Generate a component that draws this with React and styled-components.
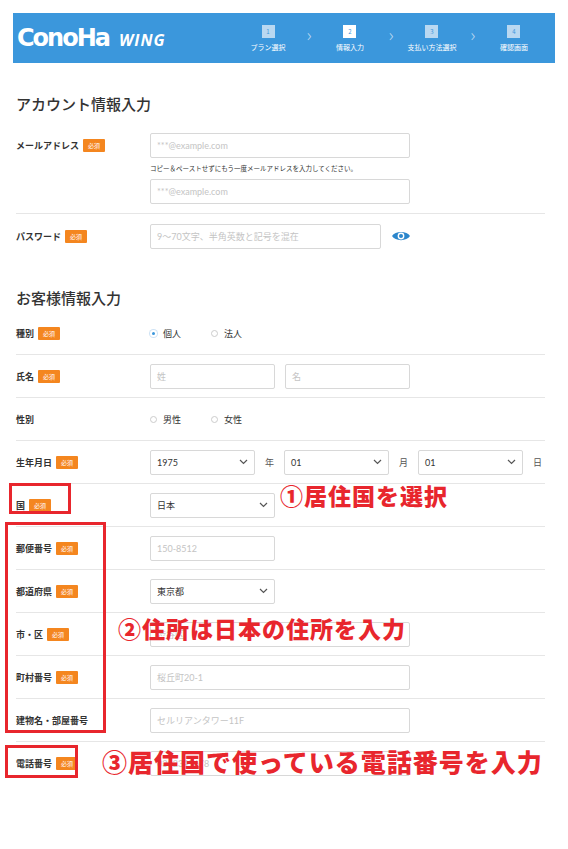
import React from 'react';
import styled, { createGlobalStyle } from 'styled-components';

const Global = createGlobalStyle`
  body { margin: 0; background: #fff; font-family: "Noto Sans CJK JP", "Noto Sans", sans-serif; color: #333; }
`;

const Page = styled.div`
  position: relative;
  width: 568px;
  height: 849px;
  padding: 13px 13px 0;
  box-sizing: border-box;
  overflow: hidden;
`;

const Header = styled.div`
  height: 50px;
  background: #3b97dc;
  display: flex;
  align-items: center;
  padding: 0 10px 0 4px;
`;

const Logo = styled.div`
  color: #fff;
  display: flex;
  align-items: baseline;
  gap: 10px;
  width: 220px;
`;

const LogoMain = styled.span`
  font-family: "DejaVu Sans", sans-serif;
  font-size: 24px;
  font-weight: bold;
  letter-spacing: -2px;
`;

const LogoSub = styled.span`
  font-family: "Open Sans", sans-serif;
  font-style: italic;
  font-weight: 700;
  font-size: 16px;
  letter-spacing: 1px;
`;

const Steps = styled.div`
  flex: 1;
  display: flex;
  justify-content: space-between;
  align-items: center;
`;

const Step = styled.div`
  display: flex;
  flex-direction: column;
  align-items: center;
  gap: 4px;
  width: 62px;
`;

const StepNum = styled.div`
  width: 13px;
  height: 13px;
  background: ${p => (p.$active ? '#fff' : '#b9d8f1')};
  color: #3b97dc;
  font-size: 6px;
  display: flex;
  align-items: center;
  justify-content: center;
`;

const StepLabel = styled.div`
  color: #fff;
  font-size: 7px;
  white-space: nowrap;
`;

const Chevron = styled.div`
  color: #b9d8f1;
  font-size: 18px;
  font-weight: 200;
  margin-top: -8px;
`;

const Content = styled.div`
  padding: 0 10px 0 3px;
`;

const SectionTitle = styled.h2`
  font-size: 15px;
  line-height: 22px;
  font-weight: 500;
  margin: 0;
  padding: ${p => (p.$first ? '30px 0 9px' : '29px 0 3px')};
`;

const Row = styled.div`
  display: grid;
  grid-template-columns: 134px 1fr;
  align-items: ${p => (p.$top ? 'start' : 'center')};
  padding: ${p => (p.$tall ? '9px 0' : '8px 0')};
  min-height: 26px;
  border-bottom: ${p => (p.$last ? 'none' : '1px solid #e6e6e6')};
`;

const Label = styled.div`
  font-size: 9px;
  font-weight: 700;
  display: flex;
  align-items: center;
  gap: 4px;
  min-height: 25px;
`;

const Req = styled.span`
  background: #f4861f;
  color: #fff;
  font-size: 6px;
  font-weight: 400;
  padding: 2px 5px;
  border-radius: 1px;
`;

const Field = styled.div`
  display: flex;
  flex-direction: column;
  gap: 4px;
`;

const Line = styled.div`
  display: flex;
  align-items: center;
  gap: 10px;
`;

const Input = styled.div`
  width: ${p => p.$w}px;
  height: 25px;
  box-sizing: border-box;
  border: 1px solid #d8d8d8;
  border-radius: 2px;
  font-size: 9px;
  color: ${p => (p.$value ? '#333' : '#c4c4c4')};
  display: flex;
  align-items: center;
  justify-content: space-between;
  padding: 0 6px;
  font-family: "Lato", "Noto Sans CJK JP", sans-serif;
`;

const Note = styled.div`
  font-size: 6.5px;
  line-height: 13px;
`;

const Unit = styled.span`
  font-size: 9px;
  color: #555;
`;

const Radio = styled.label`
  display: flex;
  align-items: center;
  gap: 6px;
  font-size: 9px;
  margin-right: 20px;
`;

const Dot = styled.span`
  width: 7px;
  height: 7px;
  border-radius: 50%;
  box-sizing: border-box;
  border: ${p => (p.$on ? '2px solid #fff' : '1px solid #ccc')};
  background: ${p => (p.$on ? '#3b97dc' : '#fff')};
  box-shadow: ${p => (p.$on ? '0 0 0 1px #cfe3f5' : 'none')};
`;

const Mark = styled.div`
  position: absolute;
  border: 3px solid #e8262d;
  box-sizing: border-box;
  left: ${p => p.$x}px;
  top: ${p => p.$y}px;
  width: ${p => p.$w}px;
  height: ${p => p.$h}px;
`;

const Callout = styled.div`
  position: absolute;
  left: ${p => p.$x}px;
  top: ${p => p.$y}px;
  color: #e8262d;
  font-weight: 900;
  font-size: ${p => p.$s}px;
  line-height: 1;
  white-space: nowrap;
  letter-spacing: 1px;
  font-family: "Noto Sans CJK JP", sans-serif;
`;

const Caret = () => (
  <svg width="9" height="6" viewBox="0 0 9 6">
    <path d="M1 1l3.5 3.5L8 1" fill="none" stroke="#555" strokeWidth="1.2" />
  </svg>
);

const Eye = () => (
  <svg width="20" height="14" viewBox="0 0 20 14">
    <path d="M1 7C4 1.5 16 1.5 19 7C16 12.5 4 12.5 1 7z" fill="#2b86cc" />
    <circle cx="10" cy="7" r="3.4" fill="#fff" />
    <circle cx="10" cy="7" r="2" fill="#2b86cc" />
  </svg>
);

const L = ({ children, req = true }) => (
  <Label>
    {children}
    {req && <Req>必須</Req>}
  </Label>
);

const Sel = ({ w, children }) => (
  <Input $w={w} $value>
    {children}
    <Caret />
  </Input>
);

const steps = ['プラン選択', '情報入力', '支払い方法選択', '確認画面'];

export default function App() {
  return (
    <Page>
      <Global />
      <Header>
        <Logo>
          <LogoMain>ConoHa</LogoMain>
          <LogoSub>WING</LogoSub>
        </Logo>
        <Steps>
          {steps.map((s, i) => (
            <React.Fragment key={s}>
              {i > 0 && <Chevron>&#x203A;</Chevron>}
              <Step>
                <StepNum $active={i === 1}>{i + 1}</StepNum>
                <StepLabel>{s}</StepLabel>
              </Step>
            </React.Fragment>
          ))}
        </Steps>
      </Header>
      <Content>
        <SectionTitle $first>アカウント情報入力</SectionTitle>
        <Row $top $tall>
          <L>メールアドレス</L>
          <Field>
            <Input $w={260}>***@example.com</Input>
            <Note>コピー＆ペーストせずにもう一度メールアドレスを入力してください。</Note>
            <Input $w={260}>***@example.com</Input>
          </Field>
        </Row>
        <Row $last $tall>
          <L>パスワード</L>
          <Line>
            <Input $w={231}>9～70文字、半角英数と記号を混在</Input>
            <Eye />
          </Line>
        </Row>

        <SectionTitle>お客様情報入力</SectionTitle>
        <Row>
          <L>種別</L>
          <Line>
            <Radio><Dot $on />個人</Radio>
            <Radio><Dot />法人</Radio>
          </Line>
        </Row>
        <Row>
          <L>氏名</L>
          <Line>
            <Input $w={125}>姓</Input>
            <Input $w={125}>名</Input>
          </Line>
        </Row>
        <Row>
          <L req={false}>性別</L>
          <Line>
            <Radio><Dot />男性</Radio>
            <Radio><Dot />女性</Radio>
          </Line>
        </Row>
        <Row>
          <L>生年月日</L>
          <Line>
            <Sel w={105}>1975</Sel><Unit>年</Unit>
            <Sel w={105}>01</Sel><Unit>月</Unit>
            <Sel w={105}>01</Sel><Unit>日</Unit>
          </Line>
        </Row>
        <Row>
          <L>国</L>
          <Sel w={125}>日本</Sel>
        </Row>
        <Row>
          <L>郵便番号</L>
          <Input $w={125}>150-8512</Input>
        </Row>
        <Row>
          <L>都道府県</L>
          <Sel w={125}>東京都</Sel>
        </Row>
        <Row>
          <L>市・区</L>
          <Input $w={260}>渋谷区</Input>
        </Row>
        <Row>
          <L>町村番号</L>
          <Input $w={260}>桜丘町20-1</Input>
        </Row>
        <Row>
          <L req={false}>建物名・部屋番号</L>
          <Input $w={260}>セルリアンタワー11F</Input>
        </Row>
        <Row $last>
          <L>電話番号</L>
          <Input $w={260}>0312345678</Input>
        </Row>
      </Content>

      <Mark $x={9} $y={483} $w={62} $h={31} />
      <Mark $x={5} $y={522} $w={101} $h={211} />
      <Mark $x={5} $y={745} $w={73} $h={33} />
      <Callout $x={280} $y={484} $s={23}>①居住国を選択</Callout>
      <Callout $x={118} $y={617} $s={23}>②住所は日本の住所を入力</Callout>
      <Callout $x={102} $y={749} $s={25}>③居住国で使っている電話番号を入力</Callout>
    </Page>
  );
}
